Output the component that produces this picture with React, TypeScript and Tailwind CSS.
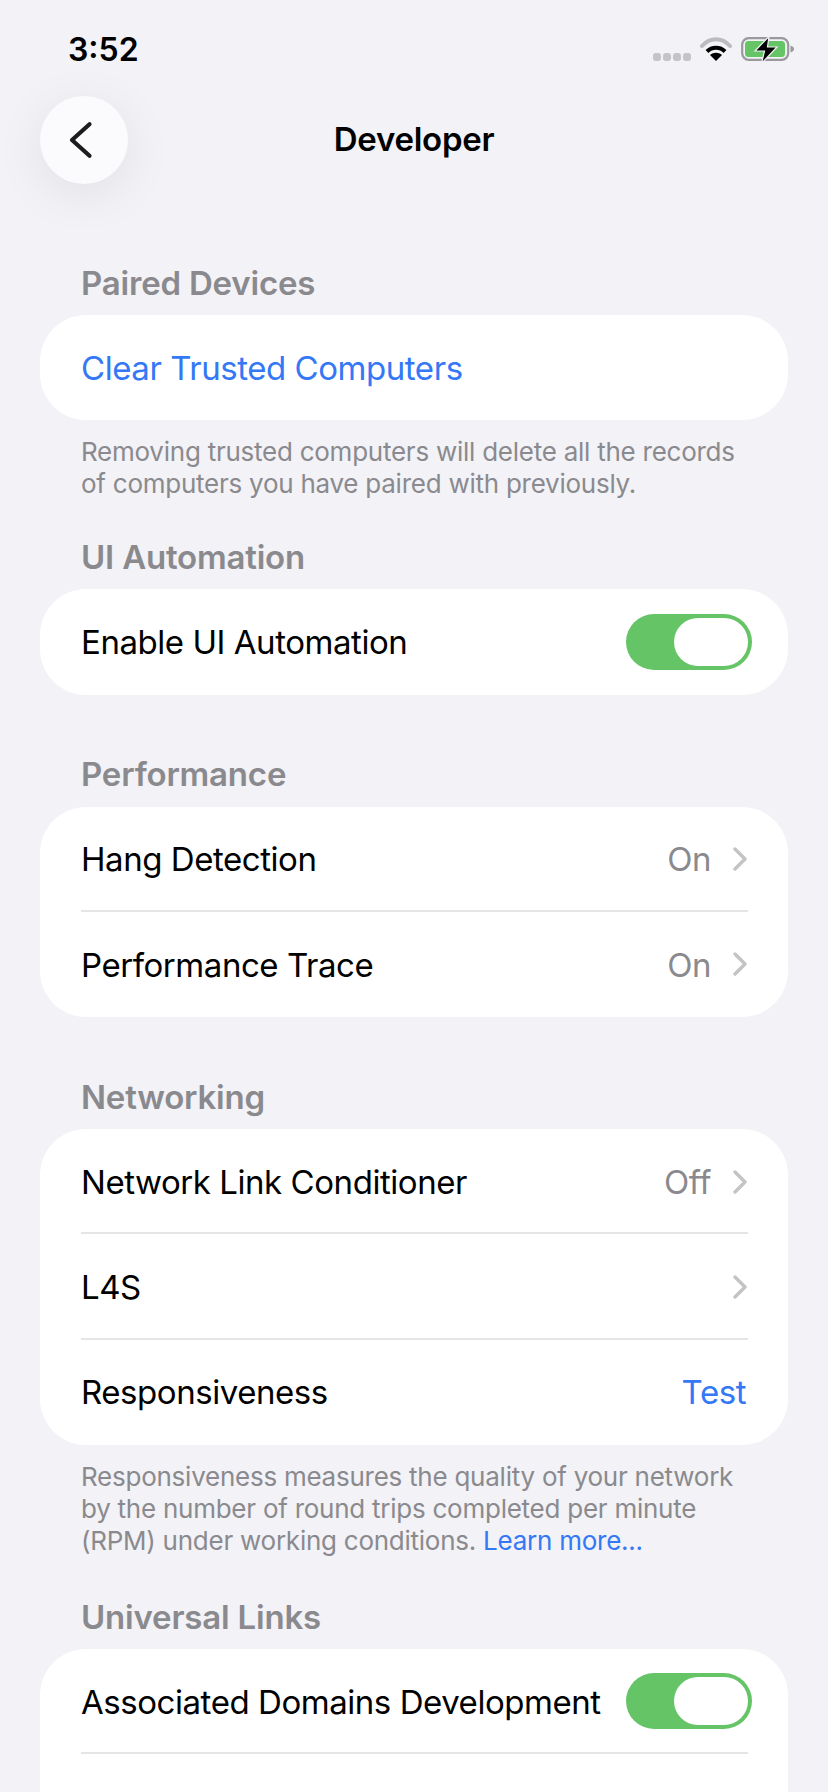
import type { ReactNode } from "react";

function SectionTitle({ children }: { children: ReactNode }) {
  return (
    <h2 className="pl-[81px] text-[33px] leading-[36px] font-semibold tracking-[-0.2px] text-[#8a8a8e]">
      {children}
    </h2>
  );
}

function Card({ children, className = "" }: { children: ReactNode; className?: string }) {
  return <div className={`mx-10 rounded-[46px] bg-white ${className}`}>{children}</div>;
}

function Toggle() {
  return (
    <div className="-mr-1.5 flex h-14 w-[126px] shrink-0 items-center justify-end rounded-full bg-[#65c466] pr-1">
      <div className="h-12 w-[74px] rounded-full bg-white" />
    </div>
  );
}

function Chevron() {
  return (
    <svg className="-mr-px ml-[22px]" width="14" height="24" viewBox="0 0 14 24">
      <path d="M2 2L12 12L2 22" fill="none" stroke="#c4c4c7" strokeWidth="3.4" strokeLinecap="round" strokeLinejoin="round" />
    </svg>
  );
}

function Row({ label, labelBlue, value, blue, chevron, toggle, divider }: {
  label: string;
  labelBlue?: boolean;
  value?: string;
  blue?: boolean;
  chevron?: boolean;
  toggle?: boolean;
  divider?: boolean;
}) {
  return (
    <div className="relative flex h-[105.25px] items-center pr-[42px] pl-[41px] text-[33px] tracking-[-0.45px] text-black">
      <span className={labelBlue ? "flex-1 pt-0.5 text-[#3478f6]" : "flex-1 pt-0.5"}>{label}</span>
      {value && (
        <span className={blue ? "pt-0.5 text-[#3478f6]" : "pt-0.5 text-[#8a8a8e]"}>{value}</span>
      )}
      {chevron && <Chevron />}
      {toggle && <Toggle />}
      {divider && <div className="absolute right-10 bottom-0 left-[41px] h-0.5 bg-[#e5e5e7]" />}
    </div>
  );
}

function Footer({ children }: { children: ReactNode }) {
  return (
    <p className="mt-4 mr-[77px] ml-[81px] text-[26px] leading-[32px] tracking-[-0.25px] text-[#8a8a8e]">{children}</p>
  );
}

function StatusIcons() {
  return (
    <div className="flex items-center pt-1">
      <div className="flex gap-0.5 pt-4">
        <span className="size-2 rounded-[3px] bg-[#c4c4c7]" />
        <span className="size-2 rounded-[3px] bg-[#c4c4c7]" />
        <span className="size-2 rounded-[3px] bg-[#c4c4c7]" />
        <span className="size-2 rounded-[3px] bg-[#c4c4c7]" />
      </div>
      <svg className="ml-[9px]" width="32" height="26" viewBox="0 0 32 26">
        <path d="M2 10C10 1 22 1 30 10" fill="none" stroke="#bcbcbf" strokeWidth="4" strokeLinecap="round" />
        <path d="M7 15.5C12 10.5 20 10.5 25 15.5" fill="none" stroke="#000" strokeWidth="4" />
        <path d="M16 25L10 19C13.5 16 18.5 16 22 19Z" fill="#000" />
      </svg>
      <svg className="ml-[9px]" width="54" height="30" viewBox="0 0 54 30">
        <rect x="1.2" y="4.2" width="46" height="21.6" rx="6.5" fill="none" stroke="#9a9a9c" strokeWidth="2.2" />
        <rect x="4" y="7" width="40" height="16" rx="3.5" fill="#65c466" />
        <path d="M49.5 11.5C52 12.3 53 13.5 53 15S52 17.7 49.5 18.5Z" fill="#9a9a9c" />
        <path d="M28 2.5L14 17H23.5L20.5 29.5L36 13H26.5Z" fill="#000" stroke="#f2f2f7" strokeWidth="1.2" />
      </svg>
    </div>
  );
}

export default function App() {
  return (
    <div className="h-[1792px] w-[828px] overflow-hidden bg-[#f2f2f7] font-['Inter',sans-serif]">
      <div className="flex items-start justify-between pt-[30px] pr-[33px] pl-[68px]">
        <span className="text-[32px] leading-[40px] font-semibold text-black">3:52</span>
        <StatusIcons />
      </div>

      <div className="relative mt-[26px] flex h-[88px] items-center justify-center">
        <div className="absolute top-0 left-10 flex size-[88px] items-center justify-center rounded-full bg-[#fbfbfe] shadow-[0_10px_50px_rgba(0,0,0,0.08)]">
          <svg className="-ml-1" width="30" height="42" viewBox="0 0 30 42">
            <path d="M22.5 5.25L5 21L22.5 36.75" fill="none" stroke="#1c1c1e" strokeWidth="4.2" strokeLinecap="round" strokeLinejoin="round" />
          </svg>
        </div>
        <h1 className="text-[33px] font-semibold tracking-[-0.25px] text-black">Developer</h1>
      </div>

      <div className="mt-[81px]">
        <SectionTitle>Paired Devices</SectionTitle>
      </div>
      <Card className="mt-[14px]">
        <Row label="Clear Trusted Computers" labelBlue />
      </Card>
      <Footer>
        Removing trusted computers will delete all the records of computers you have paired with previously.
      </Footer>

      <div className="mt-[39px]">
        <SectionTitle>UI Automation</SectionTitle>
      </div>
      <Card className="mt-[14px]">
        <Row label="Enable UI Automation" toggle />
      </Card>

      <div className="mt-[61px]">
        <SectionTitle>Performance</SectionTitle>
      </div>
      <Card className="mt-[15px]">
        <Row label="Hang Detection" value="On" chevron divider />
        <Row label="Performance Trace" value="On" chevron />
      </Card>

      <div className="mt-[62px]">
        <SectionTitle>Networking</SectionTitle>
      </div>
      <Card className="mt-[14px]">
        <Row label="Network Link Conditioner" value="Off" chevron divider />
        <Row label="L4S" chevron divider />
        <Row label="Responsiveness" value="Test" blue />
      </Card>
      <Footer>
        Responsiveness measures the quality of your network by the number of round trips completed per minute (RPM)
        under working conditions. <span className="text-[#3478f6]">Learn more...</span>
      </Footer>

      <div className="mt-[42px]">
        <SectionTitle>Universal Links</SectionTitle>
      </div>
      <Card className="mt-[14px] h-[260px]">
        <Row label="Associated Domains Development" toggle divider />
      </Card>
    </div>
  );
}
